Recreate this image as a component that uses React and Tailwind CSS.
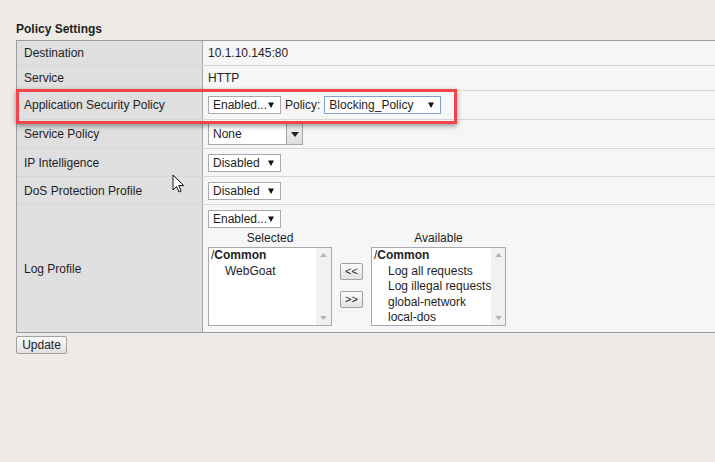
import React from 'react';

function Arrow() {
  return (
    <svg width="6" height="6" viewBox="0 0 6 6"><path d="M0 0.5h6L3 6z" fill="#111" /></svg>
  );
}

function Select({ value, width, focus }) {
  return (
    <div
      className={`flex h-[18px] items-center justify-between bg-white pl-[4px] pr-[6px] border ${focus ? 'border-[#7fa2d6]' : 'border-[#a9a9a9]'}`}
      style={{ width }}
    >
      <span>{value}</span>
      <Arrow />
    </div>
  );
}

function ComboSelect({ value }) {
  return (
    <div className="flex h-[22px] w-[95px] border border-[#a9a9a9] bg-white">
      <div className="flex flex-1 items-center pl-[4px]">{value}</div>
      <div className="flex w-[16px] items-center justify-center border-l border-[#a9a9a9] bg-gradient-to-b from-[#f2f2f2] to-[#dcdcdc]">
        <svg width="8" height="5" viewBox="0 0 8 5"><path d="M0 0h8L4 5z" fill="#222" /></svg>
      </div>
    </div>
  );
}

function ListBox({ width, items }) {
  return (
    <div className="flex h-[79px] border border-[#a9a9a9] bg-white" style={{ width }}>
      <div className="flex-1 pl-[2px] leading-[15.5px]">
        <div>/<span className="font-bold">Common</span></div>
        {items.map((it) => (
          <div key={it} className="pl-[14px] whitespace-nowrap">{it}</div>
        ))}
      </div>
      <div className="flex w-[15px] flex-col items-center justify-between bg-[#f1f1f1] py-[5px]">
        <svg width="7" height="4" viewBox="0 0 7 4"><path d="M0 4h7L3.5 0z" fill="#b5b5b5" /></svg>
        <svg width="7" height="4" viewBox="0 0 7 4"><path d="M0 0h7L3.5 4z" fill="#b5b5b5" /></svg>
      </div>
    </div>
  );
}

function MoveButton({ label }) {
  return (
    <div className="flex h-[17px] w-[23px] items-center justify-center rounded-[2px] border border-[#a0a0a0] bg-gradient-to-b from-[#fbfbfb] to-[#e2e2e2] text-[11px]">
      {label}
    </div>
  );
}

function Row({ label, height, children, last }) {
  return (
    <div className={`flex ${last ? '' : 'border-b border-[#d6d6d6]'}`} style={{ height }}>
      <div className="flex w-[186px] shrink-0 items-center border-r border-[#a8a8a8] bg-[#dfdfdf] pl-[7px]">
        {label}
      </div>
      <div className="flex flex-1 items-center bg-[#f6f6f6] pl-[5px]">{children}</div>
    </div>
  );
}

export default function App() {
  return (
    <div
      className="relative h-[462px] w-[715px] overflow-hidden bg-[#eeebe7] text-[12px] text-[#1e1e1e]"
      style={{ fontFamily: '"Liberation Sans", Arial, sans-serif' }}
    >
      <div className="pl-[16px] pt-[22px]">
        <div className="h-[18px] font-bold leading-[14px]">Policy Settings</div>
        <div className="w-[760px] border-y border-l border-[#9c9c9c]">
          <Row label="Destination" height={25}>10.1.10.145:80</Row>
          <Row label="Service" height={25}>HTTP</Row>
          <Row label="Application Security Policy" height={29}>
            <div className="flex items-center gap-[4px]">
              <Select value="Enabled..." width={73} />
              <span>Policy:</span>
              <Select value="Blocking_Policy" width={117} focus />
            </div>
          </Row>
          <Row label="Service Policy" height={29}>
            <ComboSelect value="None" />
          </Row>
          <Row label="IP Intelligence" height={28}>
            <Select value="Disabled" width={73} />
          </Row>
          <Row label="DoS Protection Profile" height={28}>
            <Select value="Disabled" width={73} />
          </Row>
          <Row label="Log Profile" height={127} last>
            <div className="flex h-full flex-col pt-[5px]">
              <Select value="Enabled..." width={73} />
              <div className="mt-[2px] flex items-start">
                <div className="flex flex-col items-center">
                  <div className="h-[17px] leading-[17px]">Selected</div>
                  <ListBox width={124} items={['WebGoat']} />
                </div>
                <div className="mx-[8px] flex flex-col gap-[11px] pt-[33px]">
                  <MoveButton label="<<" />
                  <MoveButton label=">>" />
                </div>
                <div className="flex flex-col items-center">
                  <div className="h-[17px] leading-[17px]">Available</div>
                  <ListBox
                    width={135}
                    items={['Log all requests', 'Log illegal requests', 'global-network', 'local-dos']}
                  />
                </div>
              </div>
            </div>
          </Row>
        </div>
        <button className="mt-[3px] flex h-[18px] w-[51px] items-center justify-center rounded-[2px] border border-[#a0a0a0] bg-gradient-to-b from-[#fbfbfb] to-[#e0e0e0] text-[12px]">
          Update
        </button>
      </div>

      {/* highlight box */}
      <div className="absolute left-[16px] top-[89px] h-[35px] w-[441px] border-[3px] border-[#f2444a] shadow-[0_2px_5px_rgba(0,0,0,0.4)]" />

      {/* mouse cursor */}
      <svg className="absolute left-[172px] top-[174px]" width="14" height="20" viewBox="0 0 14 20">
        <path d="M1 1v15l3.5-3.5 2.5 5.5 2.2-1-2.5-5.4h5z" fill="#fff" stroke="#111" strokeWidth="1" strokeLinejoin="round" />
      </svg>
    </div>
  );
}
